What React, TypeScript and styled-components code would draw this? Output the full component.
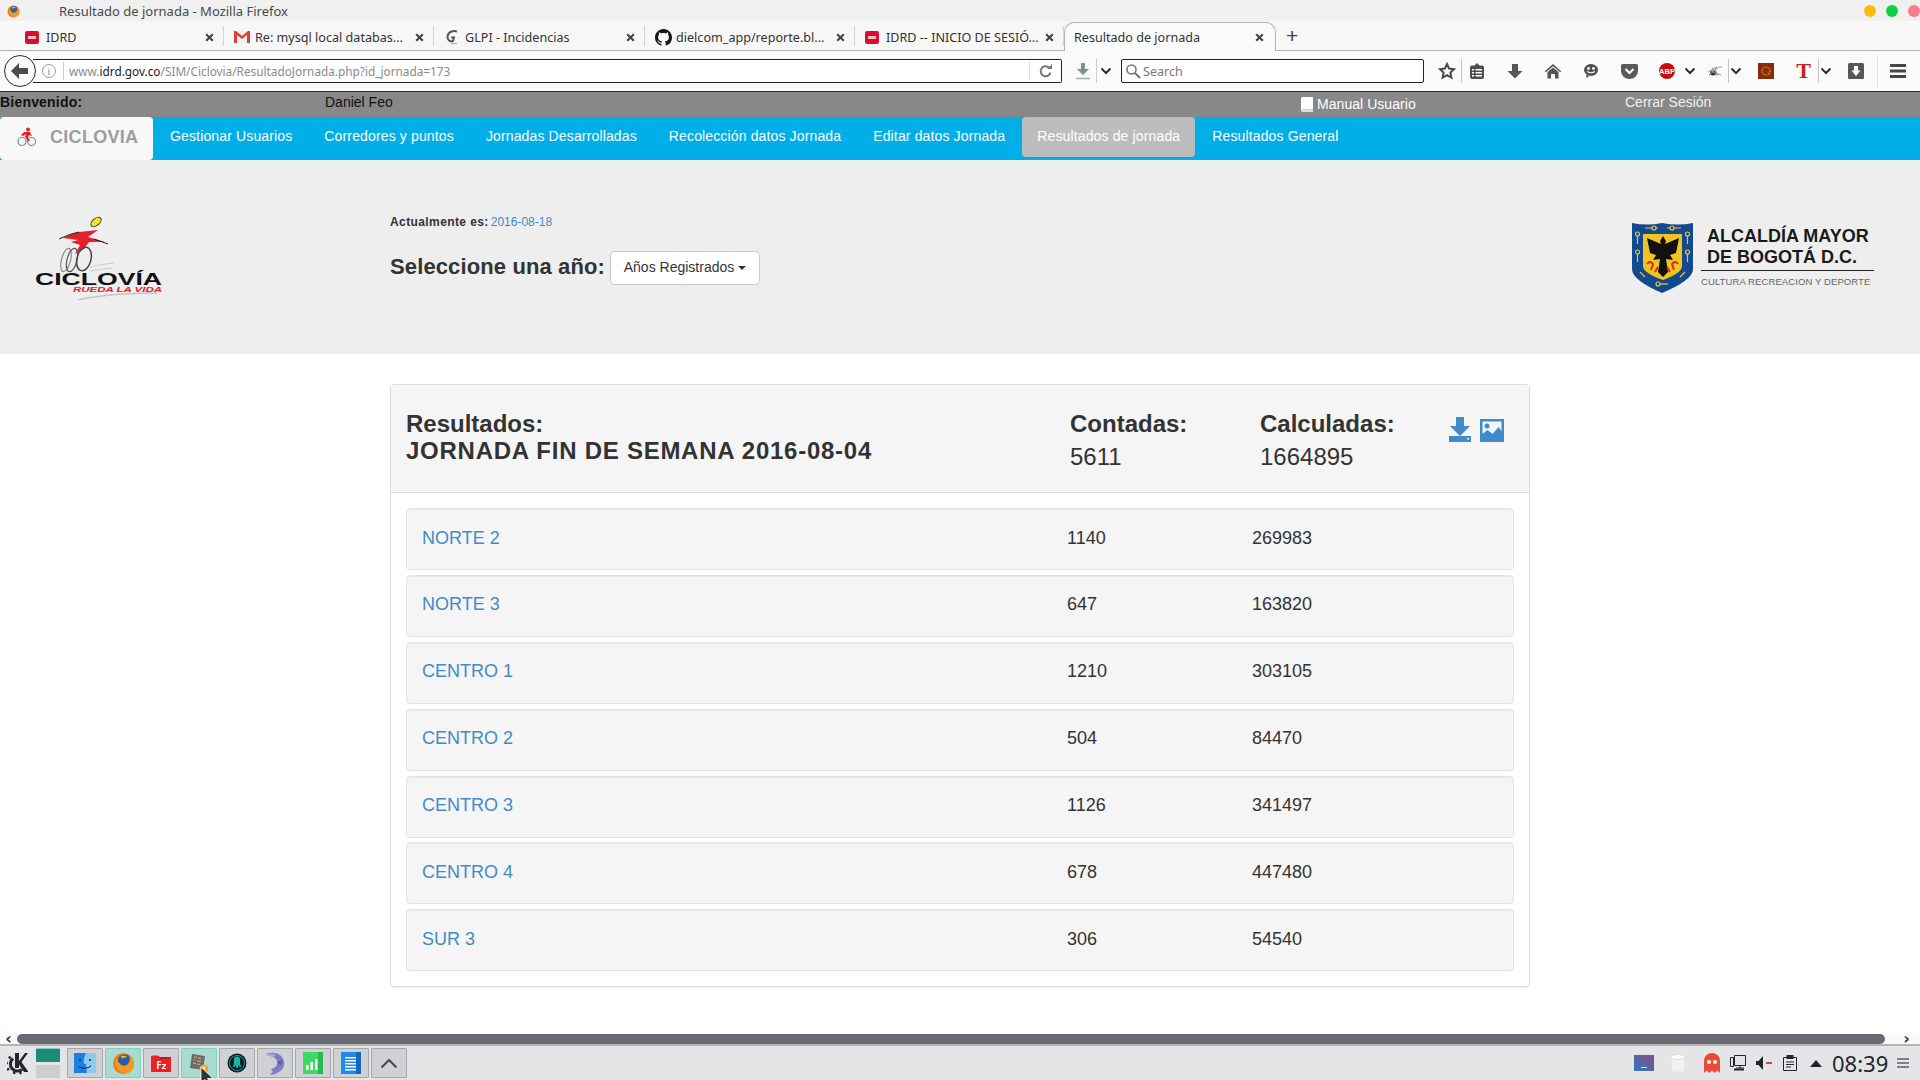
import React from 'react';
import styled, { createGlobalStyle } from 'styled-components';

const GlobalStyle = createGlobalStyle`
  html, body { margin: 0; padding: 0; background: #fff; overflow: hidden; }
  body { font-family: "Liberation Sans", Arial, sans-serif; font-size: 14px; color: #333; }
  * { box-sizing: border-box; }
`;

const tabs = [
  { title: 'IDRD', icon: 'idrd', width: 209, first: true },
  { title: 'Re: mysql local databas...', icon: 'gmail', width: 210 },
  { title: 'GLPI - Incidencias', icon: 'glpi', width: 211 },
  { title: 'dielcom_app/reporte.bl...', icon: 'github', width: 210 },
  { title: 'IDRD -- INICIO DE SESIÓ...', icon: 'idrd', width: 209 },
];

const navItems = [
  'Gestionar Usuarios',
  'Corredores y puntos',
  'Jornadas Desarrolladas',
  'Recolección datos Jornada',
  'Editar datos Jornada',
  'Resultados de jornada',
  'Resultados General',
];

const rows = [
  { name: 'NORTE 2', counted: 1140, calculated: 269983 },
  { name: 'NORTE 3', counted: 647, calculated: 163820 },
  { name: 'CENTRO 1', counted: 1210, calculated: 303105 },
  { name: 'CENTRO 2', counted: 504, calculated: 84470 },
  { name: 'CENTRO 3', counted: 1126, calculated: 341497 },
  { name: 'CENTRO 4', counted: 678, calculated: 447480 },
  { name: 'SUR 3', counted: 306, calculated: 54540 },
];

function Chevron() {
  return (
    <svg width="12" height="8" viewBox="0 0 12 8">
      <path d="M1.5 1.5 6 6l4.5-4.5" fill="none" stroke="#2b3038" strokeWidth="2" />
    </svg>
  );
}

function CloseIcon() {
  return (
    <svg width="9" height="9" viewBox="0 0 9 9">
      <path d="M1.2 1.2l6.6 6.6M7.8 1.2 1.2 7.8" stroke="#444" strokeWidth="2.1" />
    </svg>
  );
}

function TabIcon({ kind }: { kind: string }) {
  if (kind === 'gmail') {
    return (
      <svg width="16" height="14" viewBox="0 0 16 14">
        <rect x="0" y="1" width="16" height="12" fill="#eee" />
        <path d="M0 1v12h3V5l5 4 5-4v8h3V1h-2L8 6 2 1z" fill="#d9402f" />
      </svg>
    );
  }
  if (kind === 'glpi') {
    return (
      <svg width="16" height="16" viewBox="0 0 16 16">
        <path d="M13 2.5C9 1 4 3 3.5 7.5 3.2 11 6 13 9 12l1-3.5H7" fill="none" stroke="#555" strokeWidth="2" />
        <path d="M7 14.5h6" stroke="#9ab" strokeWidth="1.2" />
      </svg>
    );
  }
  if (kind === 'github') {
    return (
      <svg width="17" height="17" viewBox="0 0 16 16">
        <path
          fill="#161616"
          d="M8 0C3.58 0 0 3.58 0 8c0 3.54 2.29 6.53 5.47 7.59.4.07.55-.17.55-.38 0-.19-.01-.82-.01-1.49-2.01.37-2.53-.49-2.69-.94-.09-.23-.48-.94-.82-1.13-.28-.15-.68-.52-.01-.53.63-.01 1.08.58 1.23.82.72 1.21 1.87.87 2.33.66.07-.52.28-.87.51-1.07-1.78-.2-3.64-.89-3.64-3.95 0-.87.31-1.59.82-2.15-.08-.2-.36-1.02.08-2.12 0 0 .67-.21 2.2.82.64-.18 1.32-.27 2-.27s1.36.09 2 .27c1.53-1.04 2.2-.82 2.2-.82.44 1.1.16 1.92.08 2.12.51.56.82 1.27.82 2.15 0 3.07-1.87 3.75-3.65 3.95.29.25.54.73.54 1.48 0 1.07-.01 1.93-.01 2.2 0 .21.15.46.55.38A8.01 8.01 0 0 0 16 8c0-4.42-3.58-8-8-8z"
        />
      </svg>
    );
  }
  return (
    <svg width="14" height="13" viewBox="0 0 14 13">
      <rect width="14" height="13" rx="2" fill="#d3102e" />
      <rect x="3" y="5" width="8" height="3" fill="#f6b9c0" />
    </svg>
  );
}

function FirefoxGlyph({ size }: { size: number }) {
  return (
    <svg width={size} height={size} viewBox="0 0 24 24">
      <circle cx="12" cy="12" r="11" fill="#ef7a1d" />
      <circle cx="13" cy="9.5" r="7" fill="#2a5fa8" />
      <path d="M4 7c-2 8 3 15 10 15 5 0 9-4 9-9 0-4-2-7-5-9 1 3 1 6-1 8-2 3-7 3-9 0-1-1-2-3-4-5z" fill="#f39a1f" />
      <path d="M9 5c3-2 6-1 7 1-2-1-4 0-5 1z" fill="#f7c12f" />
    </svg>
  );
}

function getToolIcons(): { key: string; w: number; ml?: number; sep?: boolean; el: React.ReactNode }[] {
  return [
    {
      key: 'star', w: 30, ml: 8, sep: true,
      el: <svg width="18" height="18" viewBox="0 0 18 18"><path d="M9 2l2.1 4.6 5 .6-3.7 3.4 1 5L9 13.1l-4.4 2.5 1-5L1.9 7.2l5-.6z" fill="none" stroke="#4a4a4f" strokeWidth="2" /></svg>,
    },
    {
      key: 'list', w: 30,
      el: <svg width="16" height="18" viewBox="0 0 16 18"><path d="M1 5.5Q1 3.5 3 3.5h2.5L8 1l2.5 2.5H13q2 0 2 2V15q0 2-2 2H3q-2 0-2-2z" fill="#4e4e52" /><path d="M3 7h2v1.500H3zm3.500 0H13v1.500H6.500zM3 10h2v1.500H3zm3.500 0H13v1.500H6.500zM3 13h2v1.500H3zm3.500 0H13v1.500H6.500z" fill="#fff" /></svg>,
    },
    {
      key: 'down', w: 30, ml: 8,
      el: <svg width="16" height="16" viewBox="0 0 16 16"><path d="M5 1h6v7h4.500L8 15.500.5 8H5z" fill="#55565a" /></svg>,
    },
    {
      key: 'home', w: 30, ml: 8,
      el: <svg width="18" height="16" viewBox="0 0 18 16"><path d="M9 1 .8 8.200l1 1.100L9 3.200l7.200 6.100 1-1.100z" fill="#55565a" /><path d="M3.500 9 9 4.500 14.500 9v6.500H11V11H7v4.500H3.500z" fill="#55565a" /></svg>,
    },
    {
      key: 'chat', w: 30, ml: 8,
      el: <svg width="16" height="16" viewBox="0 0 16 16"><ellipse cx="8" cy="7" rx="7" ry="6" fill="#4e4e52" /><circle cx="5.500" cy="5.500" r="1.400" fill="#fff" /><circle cx="10.500" cy="5.500" r="1.400" fill="#fff" /><path d="M4 8.500q4 2.500 8 0" fill="none" stroke="#fff" strokeWidth="1.100" /><path d="M3 12l.5 3 3-2z" fill="#4e4e52" /></svg>,
    },
    {
      key: 'pocket', w: 30, ml: 8,
      el: <svg width="17" height="15" viewBox="0 0 17 15"><path d="M1.500 0h14Q17 0 17 1.500V7a8.500 8 0 0 1-17 0V1.500Q0 0 1.500 0z" fill="#5a5a5e" /><path d="M4.500 5 8.500 9l4-4" fill="none" stroke="#fff" strokeWidth="2" /></svg>,
    },
    {
      key: 'abp', w: 30, ml: 8,
      el: <ABPBadge>ABP</ABPBadge>,
    },
    { key: 'c1', w: 16, el: <Chevron /> },
    {
      key: 'bug', w: 27, ml: 4, sep: true,
      el: <svg width="17" height="13" viewBox="0 0 17 13"><ellipse cx="6" cy="8" rx="3" ry="2.500" fill="#333" /><path d="M2 10 8 5l4-3 3 0M3 5l5 3 6 2M8 2l2 9M5 3l7 7M1 7l9-5" stroke="#999" strokeWidth="1" fill="none" /></svg>,
    },
    { key: 'c2', w: 14, el: <Chevron /> },
    {
      key: 'square', w: 30, ml: 8,
      el: <svg width="16" height="16" viewBox="0 0 16 16"><rect width="16" height="16" fill="#8a2c0b" /><circle cx="8" cy="8" r="4" fill="none" stroke="#d8a02e" strokeWidth="1.200" strokeDasharray="1.500 1" /></svg>,
    },
    {
      key: 't', w: 30, ml: 8, sep: true,
      el: <TLetter>T</TLetter>,
    },
    { key: 'c3', w: 14, el: <Chevron /> },
    {
      key: 'box', w: 30, ml: 8,
      el: <svg width="16" height="16" viewBox="0 0 16 16"><rect width="16" height="16" rx="1.500" fill="#555659" /><path d="M6 3h4v4.500h2.500L8 13 3.500 7.500H6z" fill="#fff" /></svg>,
    },
  ];
}

const taskIcons: { key: string; active?: boolean; el: React.ReactNode }[] = [
  {
    key: 'finder',
    el: <svg width="22" height="20" viewBox="0 0 22 20"><rect width="22" height="20" rx="1" fill="#8cc9f0" /><path d="M0 0h12q-3 6-2 11h2q0 5 1 9H0z" fill="#1c7fe6" /><circle cx="6" cy="7" r="1" fill="#123" /><circle cx="16" cy="7" r="1" fill="#123" /><path d="M5 14q6 3 12-1" fill="none" stroke="#123" /></svg>,
  },
  { key: 'firefox', active: true, el: <FirefoxGlyph size={23} /> },
  {
    key: 'filezilla',
    el: <svg width="20" height="18" viewBox="0 0 20 18"><path d="M0 3q0-1.500 1.500-1.500H7L9 3h9.500Q20 3 20 4.500V17q0 1-1 1H1q-1 0-1-1z" fill="#ec2027" /><path d="M0 3h8.500l1 1.500H20V3z" fill="#b8141b" /><path d="M6 7h4v1.300H7.500V10H10v1.200H7.500V15H6zm5 3h4v1l-2.500 3H15v1h-4.200v-1l2.500-3H11z" fill="#fff" /></svg>,
  },
  {
    key: 'monitor',
    active: true,
    el: <svg width="20" height="21" viewBox="0 0 20 21"><path d="M3 1 16 3 14 17 1 15z" fill="#6a6a6a" /><path d="M5 4l3 .5M9 5l3 .5M4.500 7l2 .3M8 8l4 .5M4 10l3 .5M8 11l3 .4" stroke="#c96" strokeWidth="1.300" /><circle cx="15" cy="16" r="4.500" fill="#f5a623" /><path d="M15 13.500v5" stroke="#fff" strokeWidth="1.300" /></svg>,
  },
  {
    key: 'kraken',
    el: <svg width="20" height="20" viewBox="0 0 20 20"><circle cx="10" cy="10" r="9.500" fill="#0b1a20" /><circle cx="10" cy="10" r="7.500" fill="none" stroke="#17a097" strokeWidth="1" /><path d="M10 3.500c3 0 3.500 3 3 5.500l1 5h-1.500L11 11.500V15H9v-3.500L7.500 14H6l1-5C6.500 6.500 7 3.500 10 3.500z" fill="#1bb4a8" /></svg>,
  },
  {
    key: 'dolphin',
    el: <svg width="20" height="23" viewBox="0 0 20 23"><path d="M1 2q8-3 14 1 5 4 4 10-1 6-9 9-3 1-5 0l3-2-2-3q5-1 6-5 1-5-4-7-3-1-7-3z" fill="#7d7dbf" /><path d="M1 2q6-1 10 1l-2 2Q6 5 1 2z" fill="#a9a9e0" /><path d="M12 10l5-2-1 6z" fill="#5e5ea6" /></svg>,
  },
  {
    key: 'bars',
    el: <svg width="20" height="22" viewBox="0 0 20 22"><rect width="20" height="22" fill="#3dd964" /><rect x="15" width="5" height="22" fill="#2bb84e" /><path d="M3 13h2.500v5H3zm4.500-3H10v8H7.500zM12 7h2.500v11H12z" fill="#fff" /></svg>,
  },
  {
    key: 'doc',
    el: <svg width="20" height="22" viewBox="0 0 20 22"><rect width="20" height="22" fill="#1c8ae8" /><rect x="15" width="5" height="22" fill="#1168bf" /><path d="M4 5h11v1.500H4zm0 3h11v1.500H4zm0 3h11v1.500H4zm0 3h11v1.500H4zm0 3h11v1.500H4z" fill="#fff" /></svg>,
  },
  {
    key: 'up',
    el: <svg width="18" height="11" viewBox="0 0 18 11"><path d="M1.500 9.500 9 2l7.500 7.500" fill="none" stroke="#4a4d52" strokeWidth="2.200" /></svg>,
  },
];

export default function App() {
  return (
    <Screen>
      <GlobalStyle />

      <TitleBar>
        <FirefoxGlyph size={13} />
        <WindowTitle>Resultado de jornada - Mozilla Firefox</WindowTitle>
        <WindowDot $color="#fbbc0e" />
        <WindowDot $color="#0fd13f" />
        <WindowDot $color="#fb7c86" />
      </TitleBar>

      <TabStrip>
        {tabs.map((tab) => (
          <Tab key={tab.title} $w={tab.width} $first={tab.first}>
            <TabFavicon><TabIcon kind={tab.icon} /></TabFavicon>
            <TabLabel>{tab.title}</TabLabel>
            <CloseIcon />
          </Tab>
        ))}
        <ActiveTab>
          <TabLabel>Resultado de jornada</TabLabel>
          <CloseIcon />
        </ActiveTab>
        <NewTab>+</NewTab>
      </TabStrip>

      <NavToolbar>
        <BackButton>
          <svg width="18" height="16" viewBox="0 0 18 16">
            <path d="M8 0 0 8l8 8V11h9V5H8z" fill="#4c4c50" />
          </svg>
        </BackButton>
        <UrlBar>
          <InfoIcon>i</InfoIcon>
          <UrlText>
            www.<b>idrd.gov.co</b>/SIM/Ciclovia/ResultadoJornada.php?id_jornada=173
          </UrlText>
          <ReloadBox>
            <svg width="14" height="14" viewBox="0 0 14 14">
              <path d="M11.500 8.500A5 5 0 1 1 10 3.500" fill="none" stroke="#777" strokeWidth="2" />
              <path d="M8 5h5V0z" fill="#777" />
            </svg>
          </ReloadBox>
        </UrlBar>
        <DownloadSlot>
          <svg width="14" height="17" viewBox="0 0 14 17">
            <path d="M5 0h4v6h4L7 12 1 6h4z" fill="#7d9191" />
            <path d="M0 15.500h14" stroke="#9db0b0" strokeWidth="1.500" />
          </svg>
        </DownloadSlot>
        <DownloadChevron><Chevron /></DownloadChevron>
        <SearchBar>
          <svg width="16" height="16" viewBox="0 0 16 16">
            <circle cx="6.500" cy="6.500" r="4.500" fill="none" stroke="#777" strokeWidth="1.600" />
            <path d="M10 10l5 5" stroke="#777" strokeWidth="2.200" />
          </svg>
          <SearchText>Search</SearchText>
        </SearchBar>
        {getToolIcons().map((item) => (
          <ToolSlot key={item.key} $w={item.w} $ml={item.ml ?? 0} $sep={item.sep}>
            {item.el}
          </ToolSlot>
        ))}
        <MenuSlot>
          <svg width="16" height="14" viewBox="0 0 16 14">
            <path d="M0 0h16v3H0zm0 5.500h16v3H0zM0 11h16v3H0z" fill="#47474b" />
          </svg>
        </MenuSlot>
      </NavToolbar>

      <Viewport>
        <WelcomeBar>
          <WelcomeLabel>Bienvenido:</WelcomeLabel>
          <span>Daniel Feo</span>
          <ManualLink>
            <svg width="12" height="15" viewBox="0 0 12 15">
              <path d="M2 0h10v12.500H2Q0 12.500 0 14V2q0-2 2-2z" fill="#fff" />
              <path d="M0 14q0-1.500 2-1.500h10V15H2q-2 0-2-1z" fill="#ddd" />
            </svg>
            Manual Usuario
          </ManualLink>
          <LogoutLink>Cerrar Sesión</LogoutLink>
        </WelcomeBar>

        <MainNav>
          <Brand>
            <svg width="20" height="20" viewBox="0 0 20 20">
              <circle cx="5" cy="14.500" r="4" fill="none" stroke="#8a8a8a" strokeWidth="1.200" />
              <circle cx="14.500" cy="14.500" r="4" fill="none" stroke="#8a8a8a" strokeWidth="1.200" />
              <circle cx="11" cy="2.500" r="2" fill="#e32323" />
              <path d="M7 5h6l2 4-3-1-1 3 2 3h-2l-3-4 1-3-3 2-2-1z" fill="#e32323" />
            </svg>
            <BrandName>CICLOVIA</BrandName>
          </Brand>
          {navItems.map((item) => (
            <NavItem key={item} $active={item === 'Resultados de jornada'}>
              {item}
            </NavItem>
          ))}
        </MainNav>

        <Jumbo>
          <CicloviaLogo viewBox="0 0 128 85" width="128" height="85">
            <ellipse cx="61" cy="7" rx="6" ry="3.500" transform="rotate(-40 61 7)" fill="#f3e51b" stroke="#333" strokeWidth="1" />
            <path d="M28 23q10-5 16-6l19-2-10 7 17 5-16 0-5 7-9 5 5-9-9-3 7-2z" fill="#e4202a" />
            <path d="M24 24q10-5 20-7M59 24l14 5" stroke="#222" strokeWidth="1" fill="none" />
            <ellipse cx="31" cy="45" rx="4.500" ry="12" transform="rotate(14 31 45)" fill="none" stroke="#888" strokeWidth="1.200" />
            <ellipse cx="37" cy="45" rx="5" ry="12" transform="rotate(14 37 45)" fill="none" stroke="#555" strokeWidth="1.200" />
            <ellipse cx="49" cy="44" rx="7" ry="12" transform="rotate(14 49 44)" fill="none" stroke="#444" strokeWidth="1.500" />
            <path d="M55 52q12-3 24-4M55 56q12-2 22-3" stroke="#ccc" strokeWidth="1" fill="none" />
            <LogoWord x="0" y="70" textLength="127" lengthAdjust="spacingAndGlyphs">CICLOVÍA</LogoWord>
            <LogoTag x="38" y="77" textLength="89" lengthAdjust="spacingAndGlyphs">RUEDA LA VIDA</LogoTag>
            <path d="M43 85q30-7 80-7" stroke="#c4c4c4" strokeWidth="1.500" fill="none" />
          </CicloviaLogo>
          <JumboCenter>
            <CurrentDate>
              <strong>Actualmente es:</strong><a>2016-08-18</a>
            </CurrentDate>
            <YearPicker>
              <YearLabel>Seleccione una año:</YearLabel>
              <DropdownButton>
                <DropdownLabel>Años Registrados</DropdownLabel>
                <Caret />
              </DropdownButton>
            </YearPicker>
          </JumboCenter>
          <Alcaldia>
            <svg width="63" height="73" viewBox="0 0 63 73">
              <path d="M1 3q15 3 30 0 16 3 31 0v46q0 11-31 24Q1 60 1 49z" fill="#12498f" />
              <path d="M12 14h39v32q0 7-19 14-20-7-20-14z" fill="#f2c51c" />
              <path d="M32 16l3 5-1 3 14-6-3 15-6 2 3 5-7-1 2 13-5 5-5-5 2-13-7 1 3-5-6-2-3-15 14 6-1-3z" fill="#111" />
              <path d="M16 44q3-4 6 0l-2 6M47 44q-3-4-6 0l2 6M27 47l-3 5M36 47l3 5" fill="none" stroke="#e3262d" strokeWidth="2" />
              <g fill="none" stroke="#e8c43a" strokeWidth="1.200">
                <circle cx="6.500" cy="14" r="2" /><path d="M6.500 16v8" />
                <circle cx="6.500" cy="32" r="2" /><path d="M6.500 34v8" />
                <circle cx="56.500" cy="14" r="2" /><path d="M56.500 16v8" />
                <circle cx="56.500" cy="32" r="2" /><path d="M56.500 34v8" />
                <circle cx="23" cy="8" r="2" /><path d="M14 8h7M25 8h2" />
                <circle cx="41" cy="8" r="2" /><path d="M36 8h3M43 8h7" />
                <circle cx="27" cy="64" r="2" /><path d="M29 64h8" />
                <path d="M9 52l5 5M54 52l-5 5" />
              </g>
            </svg>
            <AlcaldiaText>
              <AlcaldiaName>ALCALDÍA MAYOR<br />DE BOGOTÁ D.C.</AlcaldiaName>
              <AlcaldiaSub>CULTURA RECREACION Y DEPORTE</AlcaldiaSub>
            </AlcaldiaText>
          </Alcaldia>
        </Jumbo>

        <Content>
          <Panel>
            <PanelHeader>
              <HeaderTitle>
                Resultados:
                <JornadaName>JORNADA FIN DE SEMANA 2016-08-04</JornadaName>
              </HeaderTitle>
              <Stat>
                <StatLabel>Contadas:</StatLabel>
                <StatValue>5611</StatValue>
              </Stat>
              <Stat>
                <StatLabel>Calculadas:</StatLabel>
                <StatValue>1664895</StatValue>
              </Stat>
              <HeaderActions>
                <svg width="22" height="25" viewBox="0 0 22 25">
                  <path d="M7 0h8v9h6L11 19 1 9h6z" fill="#428bca" />
                  <path d="M0 19h22v6H0z" fill="#428bca" />
                  <path d="M18 21h2v1.500h-2z" fill="#fff" />
                </svg>
                <svg width="24" height="23" viewBox="0 0 24 23">
                  <path fillRule="evenodd" d="M0 0h24v23H0zM2.500 2.500V15l5-4 5 4 6-7 3 4V2.500z" fill="#428bca" />
                  <circle cx="7" cy="7" r="2.500" fill="#428bca" />
                </svg>
              </HeaderActions>
            </PanelHeader>
            <PanelBody>
              {rows.map((row) => (
                <ResultRow key={row.name}>
                  <RowName>{row.name}</RowName>
                  <span>{row.counted}</span>
                  <span>{row.calculated}</span>
                </ResultRow>
              ))}
            </PanelBody>
          </Panel>
        </Content>
      </Viewport>

      <ScrollTrack>
        <ScrollArrow>‹</ScrollArrow>
        <ScrollThumb />
        <ScrollArrow>›</ScrollArrow>
      </ScrollTrack>

      <Taskbar>
        <svg width="21" height="24" viewBox="0 0 21 24">
          <path d="M8 2h4v8l6-8h3l-6.500 9 7 10H17l-5-7.500V17H8z" fill="#23262b" />
          <path d="M6 7.500a7 7 0 1 0 9 11" fill="none" stroke="#23262b" strokeWidth="3" />
          <path d="M3.500 7.500 2 5.500M.8 12H-1M2 17.500 0 19M7.500 20.500l-.5 2.500M13 21l1 2" stroke="#23262b" strokeWidth="2.400" />
        </svg>
        <Pager>
          <PagerDesk $on />
          <PagerDesk />
        </Pager>
        <TaskList>
          {taskIcons.map((task) => (
            <TaskButton key={task.key} $active={task.active}>{task.el}</TaskButton>
          ))}
          <CursorArrow viewBox="0 0 14 18" width="14" height="18">
            <path d="M1 0v16l4-3.500 3 5.500 2.500-1.500-3-5H13z" fill="#333" stroke="#fff" strokeWidth="0.800" />
          </CursorArrow>
        </TaskList>
        <Tray>
          <svg width="20" height="16" viewBox="0 0 20 16">
            <defs>
              <linearGradient id="wall" x1="0" y1="1" x2="1" y2="0">
                <stop offset="0" stopColor="#2b7bb9" />
                <stop offset="1" stopColor="#8c4a86" />
              </linearGradient>
            </defs>
            <rect width="20" height="16" fill="url(#wall)" />
            <rect x="7" y="12" width="6" height="1" fill="#ddd" />
          </svg>
          <TrayGap $w={16} />
          <svg width="16" height="18" viewBox="0 0 16 18">
            <path d="M1 3h14l-1.500 14q-5.500 1.500-11 0z" fill="#f1f2f2" />
            <ellipse cx="8" cy="3" rx="7" ry="2.500" fill="#fff" stroke="#dfe0c8" />
          </svg>
          <TrayGap $w={18} />
          <svg width="16" height="20" viewBox="0 0 16 20">
            <path d="M0 20V8a8 8 0 0 1 16 0v12l-2.700-2.500L11 20l-3-2.500L5 20l-2.300-2.500z" fill="#ec4a38" />
            <circle cx="5" cy="9" r="2" fill="#fff" />
            <circle cx="11" cy="9" r="2" fill="#fff" />
          </svg>
          <TrayGap $w={10} />
          <svg width="16" height="16" viewBox="0 0 16 16">
            <path d="M4.500.5h11v10h-11zM.5 2.500h3v9h-3zM6 13h8M10 11v2" fill="none" stroke="#23262b" />
            <path d="M4 14.500h10" stroke="#23262b" strokeWidth="2" />
          </svg>
          <TrayGap $w={10} />
          <svg width="16" height="14" viewBox="0 0 16 14">
            <path d="M0 5h2.500L7 0v14L2.500 9H0z" fill="#23262b" />
            <path d="M10 6h6v2h-6z" fill="#e03a56" />
          </svg>
          <TrayGap $w={11} />
          <svg width="14" height="16" viewBox="0 0 14 16">
            <path d="M.5 2.500h13v13H.5z" fill="none" stroke="#23262b" />
            <path d="M3.500 0h7v4h-7z" fill="#23262b" />
            <path d="M3 7h8M3 9.500h8M3 12h5" stroke="#23262b" />
          </svg>
          <TrayGap $w={13} />
          <svg width="12" height="7" viewBox="0 0 12 7"><path d="M6 0l6 7H0z" fill="#23262b" /></svg>
          <Clock>08:39</Clock>
          <svg width="12" height="10" viewBox="0 0 12 10">
            <path d="M0 0h12v2H0zm0 4h12v2H0zm0 4h12v2H0z" fill="#7d7f83" />
          </svg>
        </Tray>
      </Taskbar>
    </Screen>
  );
}

const Screen = styled.div`
  width: 1920px;
  height: 1080px;
  display: flex;
  flex-direction: column;
  overflow: hidden;
  background: #fff;
`;

const TitleBar = styled.div`
  height: 21px;
  flex: none;
  display: flex;
  align-items: center;
  padding: 1px 0 0 7px;
  background: #f0f0f0;
`;

const WindowTitle = styled.div`
  font: 13px "Noto Sans", sans-serif;
  color: #4a4a4a;
  margin-left: 39px;
  margin-right: auto;
`;

const WindowDot = styled.span<{ $color: string }>`
  width: 12px;
  height: 12px;
  border-radius: 50%;
  margin-right: 10px;
  background: ${(p) => p.$color};
  &:last-child { margin-right: 0; }
`;

const TabStrip = styled.div`
  height: 30px;
  flex: none;
  display: flex;
  align-items: stretch;
  background: #f7f7f7;
  border-bottom: 1px solid #b1b1b1;
`;

const Tab = styled.div<{ $w: number; $first?: boolean }>`
  width: ${(p) => p.$w}px;
  margin-left: ${(p) => (p.$first ? 15 : 0)}px;
  padding: 3px 10px 0;
  display: flex;
  align-items: center;
  position: relative;
  font: 12.6px "Noto Sans", sans-serif;
  color: #333;
  &::after {
    content: '';
    position: absolute;
    right: 0;
    top: 5px;
    bottom: 4px;
    width: 1px;
    background: #d4d4d4;
  }
`;

const TabFavicon = styled.span`
  width: 21px;
  display: flex;
  align-items: center;
`;

const TabLabel = styled.span`
  flex: 1;
  white-space: nowrap;
`;

const ActiveTab = styled.div`
  width: 212px;
  height: 30px;
  margin-top: 1px;
  padding: 0 11px 1px 9px;
  display: flex;
  align-items: center;
  background: #fafafa;
  border: 1px solid #b1b1b1;
  border-bottom: none;
  border-radius: 10px 10px 0 0;
  font: 12.6px "Noto Sans", sans-serif;
  color: #333;
`;

const NewTab = styled.div`
  margin-left: 10px;
  font: 300 21px "Liberation Sans", sans-serif;
  color: #444;
  display: flex;
  align-items: center;
`;

const NavToolbar = styled.div`
  height: 41px;
  flex: none;
  display: flex;
  align-items: center;
  background: #fafafa;
  border-bottom: 1px solid #2a2a2a;
  padding-left: 4px;
  position: relative;
`;

const BackButton = styled.div`
  width: 32px;
  height: 32px;
  margin-right: -3px;
  border: 1.5px solid #2b2b2b;
  border-radius: 50%;
  background: #fafafa;
  display: flex;
  align-items: center;
  justify-content: center;
  position: relative;
  z-index: 1;
`;

const UrlBar = styled.div`
  width: 1029px;
  height: 24px;
  display: flex;
  align-items: center;
  background: #fff;
  border: 1px solid #222;
  border-left: none;
  border-radius: 0 2px 2px 0;
  padding-left: 9px;
`;

const InfoIcon = styled.span`
  width: 14px;
  height: 14px;
  border: 1px solid #999;
  border-radius: 50%;
  font: 10px "Liberation Serif", serif;
  color: #888;
  display: flex;
  align-items: center;
  justify-content: center;
  margin-right: 7px;
`;

const UrlText = styled.span`
  flex: 1;
  padding-left: 5px;
  border-left: 1px solid #ccc;
  font: 11.8px "Noto Sans", sans-serif;
  color: #8a8a8a;
  line-height: 18px;
  b { font-weight: 400; color: #222; }
`;

const ReloadBox = styled.span`
  width: 32px;
  height: 18px;
  border-left: 1px solid #ddd;
  display: flex;
  align-items: center;
  justify-content: center;
`;

const DownloadSlot = styled.div`
  width: 28px;
  height: 24px;
  margin-left: 7px;
  display: flex;
  align-items: center;
  justify-content: center;
  border-right: 1px solid #ccc;
`;

const DownloadChevron = styled.div`
  width: 18px;
  display: flex;
  justify-content: center;
  margin-right: 6px;
`;

const SearchBar = styled.div`
  width: 303px;
  height: 24px;
  display: flex;
  align-items: center;
  gap: 2px;
  padding-left: 3px;
  background: #fff;
  border: 1px solid #222;
  border-radius: 2px;
`;

const SearchText = styled.span`
  font: 12.6px "Noto Sans", sans-serif;
  color: #777;
`;

const ToolSlot = styled.div<{ $w: number; $ml: number; $sep?: boolean }>`
  width: ${(p) => p.$w}px;
  height: 24px;
  margin-left: ${(p) => p.$ml}px;
  flex: none;
  display: flex;
  align-items: center;
  justify-content: center;
  border-right: ${(p) => (p.$sep ? '1px solid #c4c4c4' : 'none')};
`;

const ABPBadge = styled.span`
  width: 16px;
  height: 16px;
  border-radius: 50%;
  background: #c70d0c;
  color: #fff;
  font: bold 7.5px "Liberation Sans", sans-serif;
  display: flex;
  align-items: center;
  justify-content: center;
`;

const TLetter = styled.span`
  font: bold 22px "Liberation Serif", serif;
  color: #c5231a;
  line-height: 22px;
`;

const MenuSlot = styled.div`
  width: 40px;
  height: 34px;
  margin-left: 6px;
  border-left: 1px solid #e4e4e4;
  display: flex;
  align-items: center;
  justify-content: center;
`;

const Viewport = styled.div`
  flex: 1;
  min-height: 0;
  display: flex;
  flex-direction: column;
  background: #fff;
`;

const WelcomeBar = styled.div`
  height: 25px;
  flex: none;
  padding-bottom: 9px;
  display: grid;
  grid-template-columns: 325px 976px 324px 1fr;
  align-items: center;
  background: #888;
  color: #111;
  font-size: 14px;
`;

const WelcomeLabel = styled.span`
  font-weight: 700;
  letter-spacing: 0.2px;
`;

const ManualLink = styled.span`
  display: flex;
  align-items: center;
  gap: 4px;
  color: #fff;
  padding-top: 4px;
  letter-spacing: 0.05px;
`;

const LogoutLink = styled.span`
  color: #f0f0f0;
`;

const MainNav = styled.div`
  height: 43px;
  flex: none;
  display: flex;
  background: #00aee8;
`;

const Brand = styled.div`
  width: 153px;
  display: flex;
  align-items: center;
  gap: 13px;
  padding: 0 0 3px 17px;
  background: #f8f8f8;
  border-radius: 4px;
  margin-right: 2px;
`;

const BrandName = styled.span`
  font-size: 18px;
  font-weight: 700;
  color: #9d9d9d;
  letter-spacing: 0.3px;
`;

const NavItem = styled.div<{ $active?: boolean }>`
  height: 40px;
  padding: 0 15px 2px;
  margin-right: 2px;
  display: flex;
  align-items: center;
  color: #fff;
  font-size: 14px;
  letter-spacing: 0.14px;
  white-space: nowrap;
  border-radius: 4px;
  background: ${(p) => (p.$active ? '#bdbdbd' : 'transparent')};
`;

const Jumbo = styled.div`
  height: 194px;
  flex: none;
  display: grid;
  grid-template-columns: 390px 1fr auto;
  background: #eee;
`;

const CicloviaLogo = styled.svg`
  margin: 55px 0 0 35px;
`;

const LogoWord = styled.text`
  font: 700 16px "Liberation Sans", sans-serif;
  fill: #111;
`;

const LogoTag = styled.text`
  font: italic 700 8px "Liberation Sans", sans-serif;
  fill: #e4202a;
`;

const JumboCenter = styled.div`
  padding-top: 55px;
`;

const CurrentDate = styled.div`
  font-size: 12px;
  line-height: 14px;
  color: #333;
  strong { letter-spacing: 0.4px; margin-right: 2px; }
  a { color: #428bca; }
`;

const YearPicker = styled.div`
  display: flex;
  align-items: center;
  gap: 5px;
  margin-top: 22px;
`;

const YearLabel = styled.span`
  font-size: 22px;
  font-weight: 700;
  letter-spacing: 0.12px;
  color: #333;
  padding-bottom: 3px;
`;

const DropdownButton = styled.div`
  width: 150px;
  height: 34px;
  display: flex;
  align-items: center;
  justify-content: center;
  background: #fff;
  border: 1px solid #ccc;
  border-radius: 4px;
  font-size: 14px;
  color: #333;
`;

const DropdownLabel = styled.span`
  padding-bottom: 2px;
`;

const Caret = styled.span`
  margin-left: 4px;
  border-top: 4px solid #333;
  border-left: 4px solid transparent;
  border-right: 4px solid transparent;
`;

const Alcaldia = styled.div`
  display: flex;
  gap: 7px;
  padding: 60px 46px 0 0;
  align-items: flex-start;
`;

const AlcaldiaText = styled.div`
  width: 173px;
  padding-top: 6px;
`;

const AlcaldiaName = styled.div`
  font-size: 18px;
  font-weight: 700;
  line-height: 20.5px;
  color: #1a1a1a;
  padding: 0 0 3px 6px;
  border-bottom: 1px solid #222;
  white-space: nowrap;
`;

const AlcaldiaSub = styled.div`
  font-size: 9.5px;
  color: #666;
  margin-top: 5px;
  letter-spacing: 0.1px;
  white-space: nowrap;
`;

const Content = styled.div`
  flex: 1;
  padding: 30px 0 0 390px;
`;

const Panel = styled.div`
  width: 1140px;
  border: 1px solid #ddd;
  border-radius: 4px;
  box-shadow: 0 1px 1px rgba(0, 0, 0, 0.05);
`;

const PanelHeader = styled.div`
  height: 108px;
  padding-left: 15px;
  display: grid;
  grid-template-columns: 664px 190px 189px auto;
  align-items: center;
  background: #f5f5f5;
  border-bottom: 1px solid #ddd;
  color: #333;
`;

const HeaderTitle = styled.div`
  font-size: 24px;
  font-weight: 700;
  line-height: 27px;
  padding-bottom: 3px;
`;

const JornadaName = styled.div`
  letter-spacing: 0.74px;
`;

const Stat = styled.div`
  font-size: 24px;
  padding-top: 6px;
`;

const StatLabel = styled.div`
  font-weight: 700;
  line-height: 26px;
`;

const StatValue = styled.div`
  line-height: 33px;
  margin-top: 3px;
`;

const HeaderActions = styled.div`
  display: flex;
  gap: 9px;
  align-items: flex-end;
  padding-bottom: 18px;
`;

const PanelBody = styled.div`
  padding: 15px;
  display: flex;
  flex-direction: column;
  gap: 4.9px;
`;

const ResultRow = styled.div`
  height: 62px;
  padding: 0 0 2px 15px;
  display: grid;
  grid-template-columns: 645px 185px 1fr;
  align-items: center;
  background: #f5f5f5;
  border: 1px solid #e3e3e3;
  border-radius: 4px;
  box-shadow: inset 0 1px 1px rgba(0, 0, 0, 0.05);
  font-size: 18px;
  color: #333;
`;

const RowName = styled.a`
  color: #428bca;
`;

const ScrollTrack = styled.div`
  height: 11px;
  flex: none;
  display: flex;
  align-items: center;
  background: #fafafa;
`;

const ScrollArrow = styled.span`
  width: 17px;
  font: bold 16px "DejaVu Sans", sans-serif;
  line-height: 10px;
  text-align: center;
  color: #333;
  &:last-child { flex: 1; padding-left: 8px; }
`;

const ScrollThumb = styled.div`
  width: 1868px;
  height: 10px;
  border-radius: 5px;
  background: #676a70;
`;

const Taskbar = styled.div`
  height: 36px;
  flex: none;
  display: flex;
  align-items: center;
  padding-left: 7px;
  background: #e4e5e7;
  border-top: 2px solid #b4b4b4;
`;

const Pager = styled.div`
  width: 24px;
  height: 30px;
  margin-left: 8px;
  display: flex;
  flex-direction: column;
  gap: 3px;
`;

const PagerDesk = styled.div<{ $on?: boolean }>`
  flex: 1;
  background: ${(p) => (p.$on ? '#1e8a78' : '#cdced0')};
  border-top: 1px solid ${(p) => (p.$on ? '#7fd0bd' : '#cdced0')};
`;

const TaskList = styled.div`
  margin-left: 7px;
  display: flex;
  gap: 2px;
  position: relative;
`;

const TaskButton = styled.div<{ $active?: boolean }>`
  width: 36px;
  height: 30px;
  display: flex;
  align-items: center;
  justify-content: center;
  background: ${(p) => (p.$active ? '#a9dcd0' : '#cfd1d4')};
  border: 1px solid ${(p) => (p.$active ? '#7fd0bd' : '#a5a7ab')};
  border-radius: 1px;
`;

const CursorArrow = styled.svg`
  position: absolute;
  left: 133px;
  top: 19px;
`;

const Tray = styled.div`
  margin-left: auto;
  display: flex;
  align-items: center;
  padding-right: 11px;
`;

const TrayGap = styled.span<{ $w: number }>`
  width: ${(p) => p.$w}px;
`;

const Clock = styled.span`
  width: 75px;
  padding-left: 10px;
  font: 22px "Noto Sans", sans-serif;
  color: #23262b;
`;
